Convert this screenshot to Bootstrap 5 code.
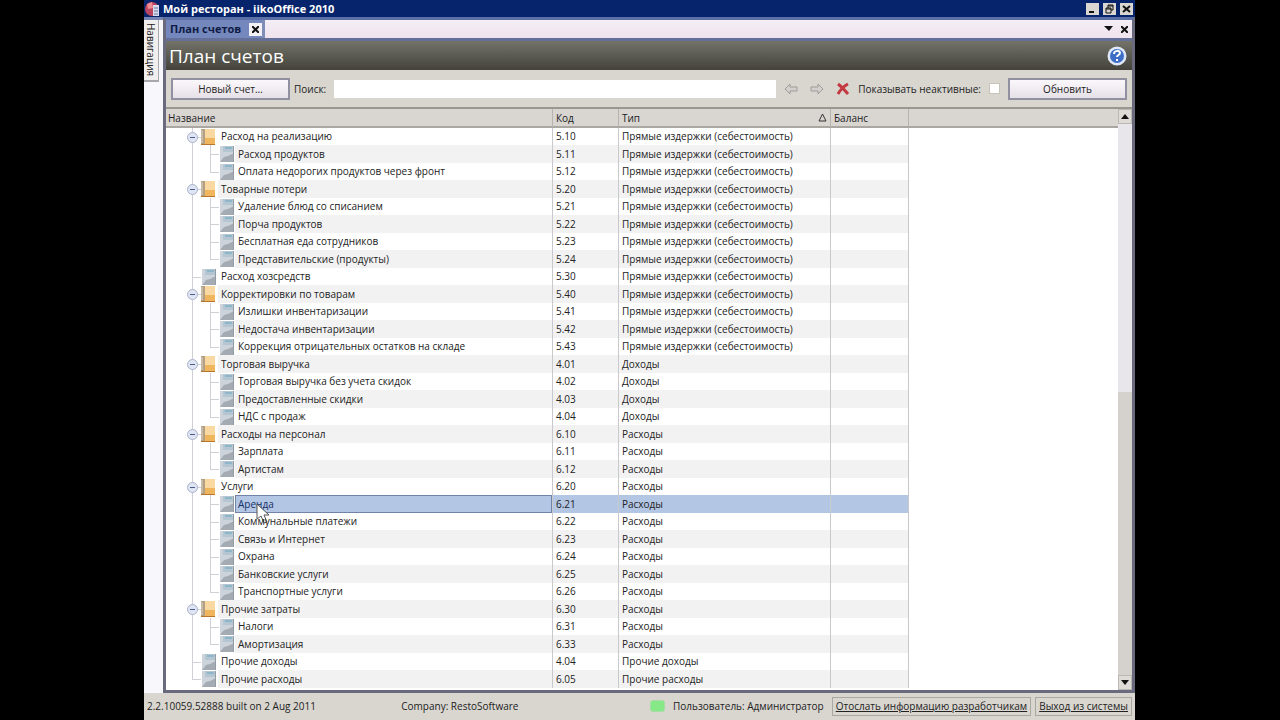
<!DOCTYPE html>
<html lang="ru">
<head>
<meta charset="utf-8">
<meta name="viewport" content="width=device-width, initial-scale=1">
<title>Мой ресторан - iikoOffice 2010</title>
<link href="https://cdn.jsdelivr.net/npm/bootstrap@5.3.0/dist/css/bootstrap.min.css" rel="stylesheet">
<style>
  body { background: #000; font-family: "Open Sans", "Noto Sans", sans-serif; font-size: 10px; line-height: 16px; color: #222; }
  button, input { font: inherit; color: inherit; }
  .app-shell { margin: 0 145px 0 144px; background: #d9d6d0; }
  .title-bar, .doc-tab { font-size: 11px; }
  .title-bar { height: 17px; background: #06246b; color: #fff; padding-right: 2px; }
  .win-btn { width: 13px; height: 12px; padding: 0; border: 0; background: #dad7d2; color: #111; }
  .win-btn svg, .plain-btn svg { display: block; margin: auto; }
  .plain-btn { border: 0; padding: 0; background: transparent; color: #111; }
  .side-rail { width: 19px; background: #f8f8fc; border-top: 3px solid #7684b4; }
  .side-tab { writing-mode: vertical-rl; width: 15px; height: 62px; padding: 0; line-height: 14px; text-align: center; background: #f1efee; border: 1px solid #a7a7ae; border-width: 0 1px 2px 0; }
  .main-pane { border: 3px solid #6a6a7e; border-top-color: #5c70a8; background: #d9d6d0; }
  .tab-strip { height: 21px; background: linear-gradient(#f4eef5, #efe3ee); border-bottom: 3px solid #65709a; }
  .doc-tab { background: #7488bd; color: #101c45; padding-left: 4px; border-right: 3px solid #7f8db9; }
  .tab-close { width: 13px; height: 13px; background: #f3f1f5; }
  .page-head { height: 29px; background: linear-gradient(#73736a, #43433b); color: #fff; padding: 0 5px 0 3px; }
  .page-head h1 { font-size: 19px; line-height: 28px; font-weight: 500; }
  .tool-row { height: 39px; padding: 0 5px; border-bottom: 2px solid #999791; }
  .push-btn { width: 119px; height: 22px; padding: 0; border: 2px solid #9090a0; background: linear-gradient(#fbf8fb, #e6e0e7); line-height: 18px; }
  .search-box { height: 18px; border: 0; background: #fff; min-width: 0; padding: 0 4px; }
  .tick { appearance: none; width: 11px; height: 11px; margin: 0; background: #fff; border: 1px solid #c9c4ba; }
  .grid-area { background: #fff; }
  .acc-table { table-layout: fixed; border-collapse: separate; border-spacing: 0; width: 100%; }
  .acc-table th { height: 19px; font-weight: 400; padding: 0 3px; line-height: 16px; background: #d9d5d1; border-bottom: 2px solid #aaa6a2; border-right: 1px solid #b7b3af; }
  .acc-table th:first-child { padding-left: 2px; }
  .acc-table th:last-child { border-right: 0; }
  .acc-table td { height: 17px; line-height: 17px; padding: 0 3px; border-right: 1px solid #c9c9cd; white-space: nowrap; }
  .acc-table tr:nth-child(even) td { height: 18px; }
  .acc-table td:last-child { border-right: 0; }
  .acc-table td:first-child { padding: 0; }
  .acc-table tr:nth-child(even) .name-part,
  .acc-table tr:nth-child(even) td:not(:first-child):not(:last-child) { background: #f3f2f3; }
  .acc-table tr.picked .name-part,
  .acc-table tr.picked td:not(:first-child):not(:last-child) { background: #b3c6e3; }
  .acc-table tr.picked .name-part { outline: 1px solid #7183a6; outline-offset: -1px; color: #16306a; }
  .name-part { height: 17px; padding-left: 3px; }
  .acc-table tr:nth-child(even) .name-part { height: 18px; line-height: 18px; }
  .tree-art { display: block; flex: none; }
  .pointer { position: absolute; left: 89px; top: 8px; }
  .v-scroll { width: 14px; background: #e8e6ea; }
  .scroll-btn { height: 15px; padding: 0; background: #dedbd7; border: 1px solid #bbb8b4; }
  .scroll-thumb { background: #d5d2ce; }
  .status-row { height: 27px; padding: 0 3px 1px 3px; }
  .user-dot { width: 15px; height: 12px; background: #86e886; border-radius: 3px; border: 1px solid #a7dca4; }
  .status-row a { color: #222; border: 1px solid #aaa8a2; height: 19px; line-height: 17px; padding: 0 3px; }
</style>
</head>
<body>
<div class="app-shell d-flex flex-column min-vh-100">
  <header class="title-bar d-flex align-items-center">
    <svg width="19" height="16" viewBox="0 0 19 16" aria-hidden="true"><circle cx="8" cy="8" r="7" fill="#b94560"/><path d="M3 3l5-2 1 6-5 1z" fill="#ef8d95"/><path d="M9 4h6v11H9z" fill="#d9dced"/><path d="M10 7h4M10 10h4M10 13h4" stroke="#6676a3"/></svg>
    <strong class="flex-grow-1">Мой ресторан - iikoOffice 2010</strong>
    <div class="d-flex">
      <button class="win-btn" aria-label="Свернуть"><svg width="11" height="10"><path d="M2 8h5" stroke="#111" stroke-width="2"/></svg></button>
      <button class="win-btn ms-1" aria-label="Восстановить"><svg width="11" height="10"><path d="M4 4V1h5v5H7M4 2h5M2 4h5v5H2zM2 5h5" fill="none" stroke="#111"/></svg></button>
      <button class="win-btn ms-1" aria-label="Закрыть"><svg width="11" height="10"><path d="M2 2l7 6M9 2L2 8" stroke="#111" stroke-width="2"/></svg></button>
    </div>
  </header>
  <div class="d-flex flex-grow-1">
    <aside class="side-rail flex-shrink-0"><button class="side-tab">Навигация</button></aside>
    <main class="main-pane d-flex flex-column flex-grow-1">
      <div class="tab-strip d-flex align-items-stretch">
        <div class="doc-tab d-flex align-items-center gap-2"><b>План счетов</b>
          <button class="plain-btn tab-close" aria-label="Закрыть вкладку"><svg width="7" height="7"><path d="M0 0l7 7M7 0L0 7" stroke="#111" stroke-width="2"/></svg></button></div>
        <div class="ms-auto d-flex align-items-center gap-2 pe-1">
          <button class="plain-btn" aria-label="Список вкладок"><svg width="9" height="6"><path d="M0 0h9L5 5z" fill="#111"/></svg></button>
          <button class="plain-btn" aria-label="Закрыть"><svg width="7" height="7"><path d="M0 0l7 7M7 0L0 7" stroke="#111" stroke-width="2"/></svg></button>
        </div>
      </div>
      <div class="page-head d-flex align-items-center justify-content-between">
        <h1 class="m-0">План счетов</h1>
        <button class="plain-btn" aria-label="Справка"><svg width="20" height="20" viewBox="0 0 20 20"><circle cx="10" cy="10" r="9.500" fill="#dfe8f8"/><circle cx="10" cy="10" r="7" fill="#3d6dc4"/><path d="M7 8c0-4 6-4 6-1 0 2-3 2-3 4M10 13v2" fill="none" stroke="#fff" stroke-width="2"/></svg></button>
      </div>
      <div class="tool-row d-flex align-items-center">
        <button class="push-btn">Новый счет…</button>
        <label for="search" class="ms-1 me-2">Поиск:</label>
        <input id="search" class="search-box flex-grow-1" type="text">
        <button class="plain-btn ms-2" aria-label="Назад"><svg width="14" height="12"><path d="M1 6l5-5v3h7v4H6v3z" fill="#d3d1cd" stroke="#9d9c99"/></svg></button>
        <button class="plain-btn ms-2 ps-1" aria-label="Вперёд"><svg width="14" height="12"><path d="M13 6L8 1v3H1v4h7v3z" fill="#d3d1cd" stroke="#9d9c99"/></svg></button>
        <button class="plain-btn ms-2 ps-1" aria-label="Очистить"><svg width="14" height="14"><path d="M2 2q4 3 10 10M12 2Q6 5 2 12" fill="none" stroke="#c33940" stroke-width="3"/></svg></button>
        <label for="inactive" class="ms-2 me-2">Показывать неактивные:</label>
        <input id="inactive" class="tick" type="checkbox">
        <button class="push-btn ms-2">Обновить</button>
      </div>
      <div class="grid-area d-flex flex-grow-1">
        <div class="flex-grow-1">
          <table class="acc-table">
            <colgroup><col style="width:387px"><col style="width:66px"><col style="width:212px"><col style="width:78px"><col></colgroup>
            <thead><tr><th>Название</th><th>Код</th><th><span class="d-flex justify-content-between align-items-center">Тип <svg width="9" height="9"><path d="M1 8L4.500 1 8 8z" fill="none" stroke="#333"/></svg></span></th><th>Баланс</th><th></th></tr></thead>
            <tbody id="accounts"></tbody>
          </table>
        </div>
        <div class="v-scroll d-flex flex-column flex-shrink-0">
          <button class="scroll-btn" aria-label="Вверх"><svg class="d-block mx-auto" width="8" height="5"><path d="M0 5l4-5 4 5z" fill="#111"/></svg></button>
          <div style="flex:268"></div>
          <div class="scroll-thumb" style="flex:284"></div>
          <button class="scroll-btn" aria-label="Вниз"><svg class="d-block mx-auto" width="8" height="5"><path d="M0 0h8L4 5z" fill="#111"/></svg></button>
        </div>
      </div>
    </main>
  </div>
  <footer class="status-row d-flex align-items-center">
    <span class="col-3">2.2.10059.52888 built on 2 Aug 2011</span>
    <span class="ms-2">Company: RestoSoftware</span>
    <span class="user-dot ms-auto me-2"></span>
    <span class="me-2">Пользователь: Администратор</span>
    <a href="#">Отослать информацию разработчикам</a>
    <a href="#" class="ms-1">Выход из системы</a>
  </footer>
</div>
<script>
  const cost = 'Прямые издержки (себестоимость)', inc = 'Доходы', exp = 'Расходы';
  // kind: g = expandable group, c = child account, t = top-level account
  const rows = [
    ['g','Расход на реализацию','5.10',cost],['c','Расход продуктов','5.11',cost],['c','Оплата недорогих продуктов через фронт','5.12',cost],
    ['g','Товарные потери','5.20',cost],['c','Удаление блюд со списанием','5.21',cost],['c','Порча продуктов','5.22',cost],['c','Бесплатная еда сотрудников','5.23',cost],['c','Представительские (продукты)','5.24',cost],
    ['t','Расход хозсредств','5.30',cost],
    ['g','Корректировки по товарам','5.40',cost],['c','Излишки инвентаризации','5.41',cost],['c','Недостача инвентаризации','5.42',cost],['c','Коррекция отрицательных остатков на складе','5.43',cost],
    ['g','Торговая выручка','4.01',inc],['c','Торговая выручка без учета скидок','4.02',inc],['c','Предоставленные скидки','4.03',inc],['c','НДС с продаж','4.04',inc],
    ['g','Расходы на персонал','6.10',exp],['c','Зарплата','6.11',exp],['c','Артистам','6.12',exp],
    ['g','Услуги','6.20',exp],['c','Аренда','6.21',exp],['c','Коммунальные платежи','6.22',exp],['c','Связь и Интернет','6.23',exp],['c','Охрана','6.24',exp],['c','Банковские услуги','6.25',exp],['c','Транспортные услуги','6.26',exp],
    ['g','Прочие затраты','6.30',exp],['c','Налоги','6.31',exp],['c','Амортизация','6.33',exp],
    ['t','Прочие доходы','4.04','Прочие доходы'],['t','Прочие расходы','6.05','Прочие расходы']
  ];
  const leaf = x => `<path d="M${x} 1h14v16h-14z" fill="#ccd3da"/><path d="M${x+3} 1h11v6h-11z" fill="#b3c6d2"/><path d="M${x+5} 3h7" stroke="#8fb6c8" stroke-width="2"/><path d="M${x} 17l4-5 4-1 6-3v9z" fill="#a5abb3"/><path d="M${x+13.5} 1v16" stroke="#939ca4"/>`;
  const book = '<path d="M35 1h14v16H35z" fill="#efb65e"/><path d="M39 1h10v9H39z" fill="#f9d9a1"/><path d="M35 1h4v16h-4z" fill="#b39f82"/><path d="M36 2v13" stroke="#ddd6cc"/><path d="M35 16.500h14" stroke="#b7762c"/>';
  document.getElementById('accounts').innerHTML = rows.map(([k, name, code, type], i) => {
    const last = i === rows.length - 1, endChild = k === 'c' && (!rows[i+1] || rows[i+1][0] !== 'c');
    const w = k === 'c' ? 69 : 52;
    let art = `<path d="M26.500 0V${last ? 9 : 18}" stroke="#cfd0d6"/>`;
    if (k === 'c') art += `<path d="M44.500 0V${endChild ? 9 : 18}M44 9.500h9" fill="none" stroke="#cfd0d6"/>` + leaf(54);
    if (k === 't') art += '<path d="M26 9.500h9" stroke="#cfd0d6"/>' + leaf(36);
    if (k === 'g') art += '<path d="M31 9.500h4" stroke="#cfd0d6"/><circle cx="26.500" cy="9.500" r="5" fill="#dfe5f2" stroke="#a9b3cc"/><path d="M24 9.500h5" stroke="#4c5c88"/>' + book;
    const picked = name === 'Аренда';
    const cur = picked ? '<svg class="pointer" width="16" height="22"><path d="M2 1v15l4-3 3 7 3-1-3-7h5z" fill="#fff" stroke="#555"/></svg>' : '';
    return `<tr${picked ? ' class="picked"' : ''}><td><div class="d-flex position-relative"><svg class="tree-art" width="${w}" height="${i % 2 ? 18 : 17}">${art}</svg><span class="name-part flex-grow-1">${name}</span>${cur}</div></td><td>${code}</td><td>${type}</td><td></td><td></td></tr>`;
  }).join('');
</script>
<script src="https://cdn.jsdelivr.net/npm/bootstrap@5.3.0/dist/js/bootstrap.bundle.min.js"></script>
</body>
</html>
